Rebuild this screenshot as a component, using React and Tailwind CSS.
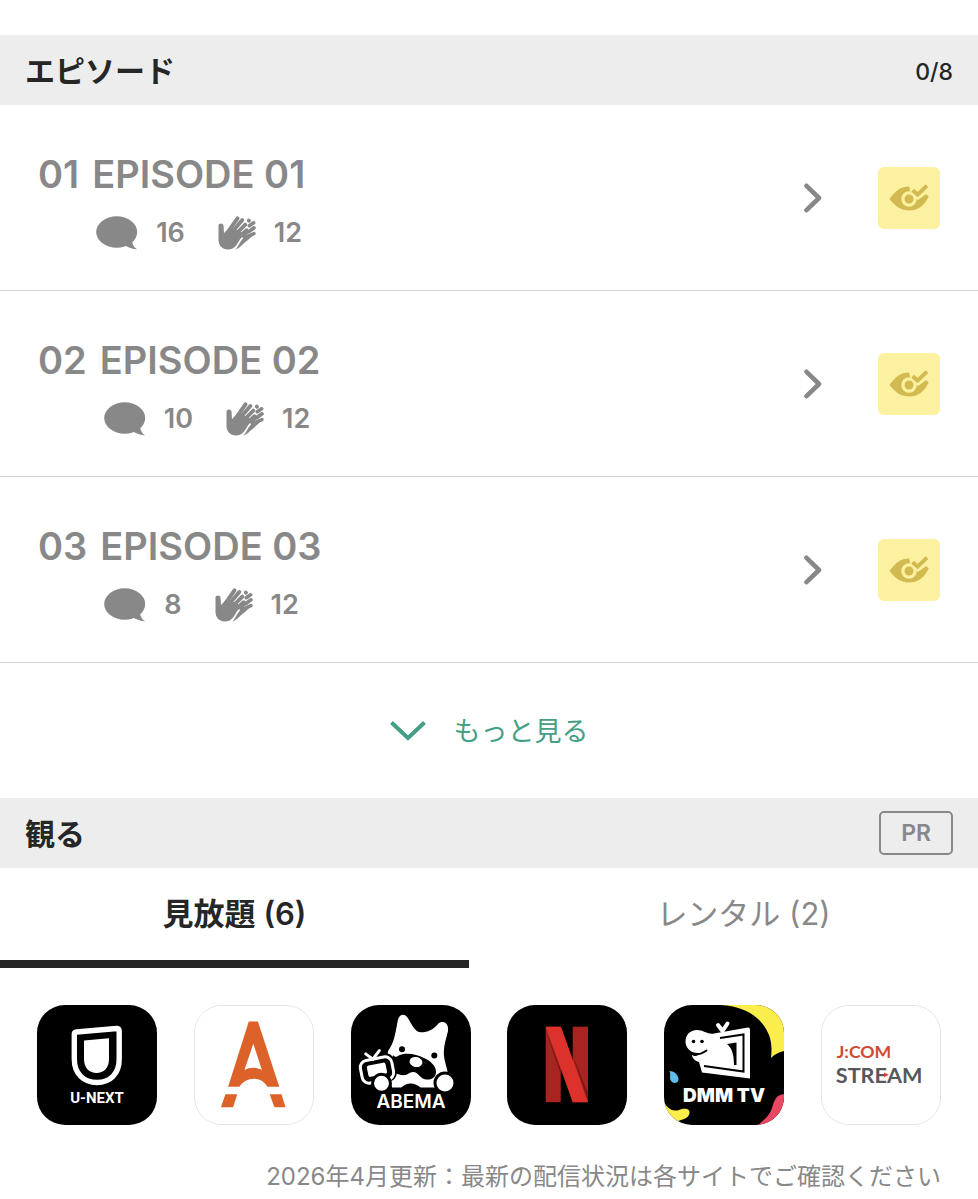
import React, { useState } from 'react';

const episodes = [
  { number: '01', title: 'EPISODE 01', comments: 16, claps: 12 },
  { number: '02', title: 'EPISODE 02', comments: 10, claps: 12 },
  { number: '03', title: 'EPISODE 03', comments: 8, claps: 12 },
];

const tabs = [
  { id: 'flat', label: '見放題 (6)' },
  { id: 'rental', label: 'レンタル (2)' },
];

function CommentIcon() {
  return (
    <svg viewBox="0 0 42 34" className="h-[34px] w-[42px] fill-current" aria-hidden="true">
      <ellipse cx="20.7" cy="16" rx="20.5" ry="15.7" />
      <path d="M26 29 C31 30 35 33 41 33.6 C38 31 36.5 28.5 36 25 Z" />
    </svg>
  );
}

function ClapIcon() {
  return (
    <svg
      viewBox="0 0 38 34"
      className="h-[34px] w-[38px]"
      fill="none"
      stroke="currentColor"
      strokeLinecap="round"
      aria-hidden="true"
    >
      <path
        d="M0.5 9.5 C0.5 6.8 5.3 6.8 5.5 9.5 L6 17 L12 11 L25 17 L22.5 22 C20 27 17 33.5 10 33.5 C4 33.5 0.5 29 0.5 24 Z"
        fill="currentColor"
        stroke="none"
      />
      <g strokeWidth="3.9">
        <path d="M8.5 18 L19.5 2.3" />
        <path d="M12 18.5 L24.3 4" />
        <path d="M15.5 20.5 L27.3 8.6" />
        <path d="M18.5 23.5 L28.6 14.3" />
        <path d="M30.8 4.6 L31 4.7" />
      </g>
      <path d="M31.3 9.7 L35.6 6.8" strokeWidth="3.6" />
      <path d="M31 15.5 L36 11.8" strokeWidth="3.6" />
      <path d="M26.5 21.5 L36 17.6" strokeWidth="3.4" />
      <path d="M25 20 L31 15.5" strokeWidth="2.8" />
      <path
        d="M17.5 33.5 C20 31 22.5 24.5 27 20 L36.5 17.5 C34 21 26 27 23.5 29.5 C21.5 31.5 19.5 33 17.5 33.5 Z"
        fill="currentColor"
        stroke="none"
      />
    </svg>
  );
}

function WatchedIcon() {
  return (
    <svg viewBox="0 0 40 28" className="h-7 w-10" aria-hidden="true">
      <path
        d="M0.5 15 C6 7 12 2.5 20 2.5 C28 2.5 34 7 39.7 12.5 C35 22 29 26.5 20 26.5 C12 26.5 6 22 0.5 15 Z"
        fill="#d3ba50"
      />
      <circle cx="20" cy="15" r="7.7" fill="#fbf1a1" />
      <path d="M20 2 L30 2 L40 0 V8 L29 16 L22 11 Z" fill="#fbf1a1" />
      <circle cx="20" cy="15" r="4.5" fill="#d3ba50" />
      <path d="M23.6 6.2 L28.6 10.6 L38 1.6" fill="none" stroke="#d3ba50" strokeWidth="4" />
    </svg>
  );
}

function UNextLogo() {
  return (
    <svg viewBox="0 0 120 120" className="size-full bg-black">
      <path
        d="M39.5 27 L79.5 23.5 Q82.2 23.3 82.2 26 V54 C82.2 69 73 77.5 60 77.5 C47 77.5 37.3 69 37.3 54 V29.5 Q37.3 27.2 39.5 27 Z"
        fill="none"
        stroke="#fff"
        strokeWidth="5.4"
      />
      <path d="M47 35.4 L72 33.2 V54 C72 63 66.5 68 59.5 68 C52.5 68 47 63 47 54 Z" fill="#fff" />
      <text x="60" y="98" textAnchor="middle" fill="#fff" fontSize="15" className="font-['Roboto',sans-serif] font-bold">
        U-NEXT
      </text>
    </svg>
  );
}

function AnimeStoreLogo() {
  return (
    <svg viewBox="0 0 120 120" className="size-full bg-white" fill="#dd622a">
      <path
        fillRule="evenodd"
        d="M54.7 15.7 H64 L85.7 82 H73.5 C70.5 77 66 74 60 74 C54 74 48.5 77 45.3 82 H33.7 Z M59.3 38.3 L50.3 65 C56 62 62.5 62 68 65 Z"
      />
      <path d="M31 89.7 H43 L38.7 103 H26.3 Z" />
      <path d="M76 89.7 H88 L92 103 H80.7 Z" />
    </svg>
  );
}

function AbemaLogo() {
  return (
    <svg viewBox="0 0 120 120" className="size-full bg-black">
      <path
        d="M37 46 C43 38 44 30 46.5 17 C48 8 54 8 57.5 14 C61 20 64 27 70 27.3 C76 27.5 82 25 87 19 C91 15 98 17 97 26 C95 35 92 42 93 51 C94 60 97 63 97 73 L84 82.5 H41 L36 60 Z"
        fill="#fff"
      />
      <path d="M50 83 C55 77 64 77 70 83 Z" fill="#000" />
      <path
        d="M42 50 C45 54 47 50 52 49 C60 48 67 50 73 53 C80 56 85 61 85 67 C85 73 79 76 73 74 C68 72 67 67 62 67 C58 67 57 71 50 70 C45 69 42 67 39 66 Z"
        fill="#000"
      />
      <ellipse cx="65" cy="57" rx="6.5" ry="5" fill="#fff" transform="rotate(12 65 57)" />
      <circle cx="51" cy="44.3" r="3" fill="#000" />
      <circle cx="83.3" cy="50.6" r="3" fill="#000" />
      <g transform="rotate(-11 26 65)">
        <rect x="7" y="50" width="38" height="29" rx="9" fill="#000" />
        <rect x="10" y="53.5" width="32" height="23" rx="7" fill="none" stroke="#fff" strokeWidth="3" />
        <rect x="16.5" y="59" width="19" height="11.5" rx="2" fill="#fff" />
        <path d="M18 47 L24 53.5 L32 46.5" fill="none" stroke="#fff" strokeWidth="3" strokeLinecap="round" />
      </g>
      <circle cx="30.5" cy="78.3" r="9" fill="#fff" stroke="#000" strokeWidth="3" />
      <circle cx="94" cy="78" r="10" fill="#fff" stroke="#000" strokeWidth="3" />
      <text x="60" y="103" textAnchor="middle" fill="#fff" fontSize="19" className="font-['Inter',sans-serif] font-semibold">
        ABEMA
      </text>
    </svg>
  );
}

function NetflixLogo() {
  return (
    <svg viewBox="0 0 120 120" className="size-full bg-black">
      <rect x="38.7" y="21.7" width="15" height="75.5" fill="#a92421" />
      <rect x="65.7" y="21.7" width="15.3" height="75.5" fill="#a92421" />
      <path d="M38.7 26 L53.7 62 V69 Z M65.7 50 L81 88 V97 Z" fill="#7e1715" />
      <path d="M38.7 21.7 H54 L81 97.2 H65.7 Z" fill="#dc322b" />
    </svg>
  );
}

function DmmTvLogo() {
  return (
    <svg viewBox="0 0 120 120" className="size-full bg-black">
      <path d="M57 0 C78 1 94 10 102 24 C108 34 108 43 107 53 C111 49 115 47 120 46 V0 Z" fill="#fbed4b" />
      <path d="M120 89 C111 90 110 97 108 103 C106 110 101 114 94 120 H120 Z" fill="#ea4862" />
      <path d="M5.5 66 C11 66 15 71 14.5 75 C14 79 8 79 6.5 75 C5.5 72 7 70 5.5 66 Z" fill="#62bdea" />
      <path d="M0 97 C3 103 8 107 15 105 C20 103 26 103 25.5 108 C25 114 16 115 12 117 L4 118 L0 106 Z" fill="#fbed4b" />
      <path
        d="M33 25 C40 25 44 30 50 28.5 L84 22.5 Q86 22.5 86 24.5 V73.5 L38 67.5 L35 57 C31 56 28 53 28 50 C31 52 34 51 36 48 C27 49 21.5 43 21.5 36.5 C21.5 30 26 25 33 25 Z"
        fill="#fff"
      />
      <path d="M56 33 L79.5 29.5 V66.5 L40 61" fill="none" stroke="#000" strokeWidth="2" />
      <path d="M63 39 L72.5 37.5 V60 H70 C70 50 68 43 63 39 Z" fill="#000" />
      <path d="M28 48.5 C33 50.5 39 48 42.5 45.5" fill="none" stroke="#000" strokeWidth="2" strokeLinecap="round" />
      <circle cx="29.5" cy="36.5" r="1.8" fill="#000" />
      <circle cx="38" cy="36.5" r="1.8" fill="#000" />
      <path d="M54 20 L58.5 26 L63.5 18.5" fill="none" stroke="#fff" strokeWidth="4" strokeLinecap="round" />
      <text x="60" y="97" textAnchor="middle" fill="#fff" fontSize="19" className="font-['Inter',sans-serif] font-black">
        DMM TV
      </text>
    </svg>
  );
}

function JcomStreamLogo() {
  return (
    <svg viewBox="0 0 120 120" className="size-full bg-white">
      <text x="15" y="53" fill="#cf4a32" fontSize="18" className="font-['Lato',sans-serif] font-bold">
        J:COM
      </text>
      <text x="14" y="78" fill="#58585a" fontSize="22" className="font-['Lato',sans-serif] font-bold">
        STREAM
      </text>
      <path d="M63 67.5 L68 70 L63 72.5 Z" fill="#d8432c" />
    </svg>
  );
}

const services = [
  { name: 'U-NEXT', logo: UNextLogo },
  { name: 'dアニメストア', logo: AnimeStoreLogo, light: true },
  { name: 'ABEMA', logo: AbemaLogo },
  { name: 'Netflix', logo: NetflixLogo },
  { name: 'DMM TV', logo: DmmTvLogo },
  { name: 'J:COM STREAM', logo: JcomStreamLogo, light: true },
];

export default function App() {
  const [activeTab, setActiveTab] = useState('flat');

  return (
    <main className="bg-white pt-[35px] font-['Inter','Noto_Sans_CJK_JP',sans-serif] text-[#262626]">
      <section>
        <header className="flex h-[70px] items-center justify-between bg-[#ededed] px-[25px]">
          <h2 className="pt-0.5 text-[30px] leading-[44px] font-bold">エピソード</h2>
          <span className="pt-1 text-[23px] leading-8 font-medium">0/8</span>
        </header>
        <ul>
          {episodes.map((episode) => (
            <li
              key={episode.number}
              className="flex items-center border-b border-[#d3d3d9] px-[38px] text-[#888888]"
            >
              <div className="flex flex-1 gap-[13px] pt-[46px] pb-[37px]">
                <span className="text-[38px] leading-[46px] font-semibold">{episode.number}</span>
                <div>
                  <h3 className="text-[38px] leading-[46px] font-semibold">
                    <a href="#episode">{episode.title}</a>
                  </h3>
                  <div className="mt-4 flex h-10 items-center gap-[33px] pl-1 text-[27px] font-semibold">
                    <span className="flex items-center gap-[18px]">
                      <CommentIcon />
                      {episode.comments}
                    </span>
                    <span className="flex items-center gap-[18px]">
                      <ClapIcon />
                      {episode.claps}
                    </span>
                  </div>
                </div>
              </div>
              <a href="#episode" aria-label={`${episode.title}を開く`} className="mr-14">
                <svg
                  viewBox="0 0 18 30"
                  className="h-[30px] w-[18px]"
                  fill="none"
                  stroke="currentColor"
                  strokeWidth="4.6"
                  strokeLinecap="round"
                  strokeLinejoin="round"
                >
                  <path d="M2.5 2.8 L15 15 L2.5 27.2" />
                </svg>
              </a>
              <button
                type="button"
                aria-label={`${episode.title}を見た`}
                className="flex size-[62px] items-center justify-center rounded-md bg-[#fbf1a1]"
              >
                <WatchedIcon />
              </button>
            </li>
          ))}
        </ul>
        <button
          type="button"
          className="flex h-[135px] w-full items-center justify-center gap-7 text-[#459f86]"
        >
          <svg viewBox="0 0 36 20" className="h-5 w-9" fill="none" stroke="currentColor" strokeWidth="4" aria-hidden="true">
            <path d="M1.5 1.5 L18 17 L34.5 1.5" />
          </svg>
          <span className="pt-1 text-[27px]">もっと見る</span>
        </button>
      </section>

      <section>
        <header className="flex h-[70px] items-center justify-between bg-[#ededed] px-[25px]">
          <h2 className="pt-0.5 text-[30px] leading-[44px] font-bold">観る</h2>
          <span className="rounded-[5px] border-2 border-[#888888] px-5 py-1 text-[23px] leading-8 font-semibold text-[#888888]">
            PR
          </span>
        </header>
        <div role="tablist" className="flex gap-10">
          {tabs.map((tab) => (
            <button
              key={tab.id}
              type="button"
              role="tab"
              aria-selected={tab.id === activeTab}
              onClick={() => setActiveTab(tab.id)}
              className={`h-[100px] flex-1 border-b-8 text-[31px] ${
                tab.id === activeTab
                  ? 'border-[#262626] font-semibold text-[#262626]'
                  : 'border-transparent text-[#888888]'
              }`}
            >
              {tab.label}
            </button>
          ))}
        </div>
        <ul className="flex justify-between px-[37px] pt-[37px]">
          {services.map((service) => {
            const Logo = service.logo;
            return (
              <li key={service.name}>
                <a
                  href="#service"
                  aria-label={service.name}
                  className={`block size-[120px] overflow-hidden rounded-[28px] ${
                    service.light ? 'border border-[#e3e3e3]' : ''
                  }`}
                >
                  <Logo />
                </a>
              </li>
            );
          })}
        </ul>
        <p className="px-[37px] pt-9 text-right text-2xl font-normal text-[#888888]">
          2026年4月更新：最新の配信状況は各サイトでご確認ください
        </p>
      </section>
    </main>
  );
}
